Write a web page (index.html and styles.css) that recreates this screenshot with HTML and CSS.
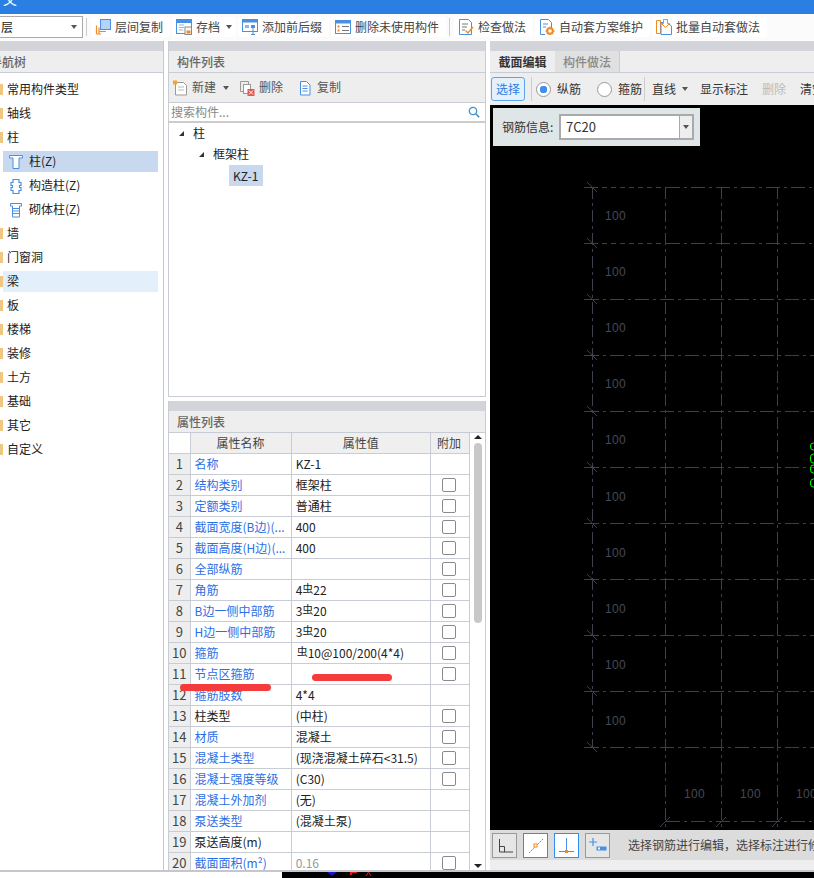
FILE: index.html
```
<!DOCTYPE html>
<html lang="zh-CN">
<head>
<meta charset="utf-8">
<title>截面编辑</title>
<link rel="stylesheet" href="styles.css">
</head>
<body>
<div class="app">
  <header class="titlebar"><span class="title-text">义</span></header>

  <div class="toolbar">
    <div class="combo"><span class="combo-text">层</span><i class="caret"></i></div>
    <span class="tb-sep"></span>
    <div class="tile">
      <svg class="ic" viewBox="0 0 16 16"><path d="M1.500 15V6.500M1.500 15H6M4 15V8.500" fill="none" stroke="#f08a24" stroke-width="1.200"/><rect x="5.500" y="0.500" width="10" height="10" fill="#b5d3f7" stroke="#4a90e2"/><path d="M4 12.500h7" fill="none" stroke="#f08a24"/></svg>
      <span>层间复制</span>
    </div>
    <div class="tile">
      <svg class="ic" viewBox="0 0 16 16"><rect x="0.500" y="0.500" width="15" height="14" fill="#fff" stroke="#4a90e2"/><path d="M1 1h14v3H1z" fill="#4a90e2"/><path d="M3 6h5M3 8.500h5M3 11h4" stroke="#8ab6ea"/><rect x="9" y="8" width="6.500" height="7.500" fill="#fff" stroke="#888"/><rect x="10.500" y="11.500" width="4" height="3" fill="#f08a24"/></svg>
      <span>存档</span><i class="caret caret-gap"></i>
    </div>
    <div class="tile">
      <svg class="ic" viewBox="0 0 16 16"><rect x="0.500" y="0.500" width="15" height="12" fill="#fff" stroke="#4a90e2"/><path d="M1 1h14v2.500H1z" fill="#4a90e2"/><path d="M3 6h4v3H3z" fill="#8ab6ea"/><path d="M9 6h4v3H9z" fill="#4a90e2"/><path d="M11 9v6.500M9 15.500h4" stroke="#4a90e2"/></svg>
      <span>添加前后缀</span>
    </div>
    <div class="tile">
      <svg class="ic" viewBox="0 0 16 16"><rect x="0.500" y="1.500" width="15" height="13" fill="#fff" stroke="#4a90e2"/><path d="M1 2h14v2.500H1z" fill="#4a90e2"/><path d="M2.500 6.500h2v2h-2zM2.500 10.500h2v2h-2z" fill="#f08a24"/><path d="M7 7.500h7M7 11.500h7" stroke="#777"/></svg>
      <span>删除未使用构件</span>
    </div>
    <span class="tb-sep"></span>
    <div class="tile">
      <svg class="ic" viewBox="0 0 16 16"><path d="M1.500 0.500h9l3 3v12h-12z" fill="#fff" stroke="#4a90e2"/><path d="M4 5h6M4 8h5M4 11h3" stroke="#777"/><path d="M7.500 11.500l2.500 2.500 5-6" fill="none" stroke="#f08a24" stroke-width="1.400"/></svg>
      <span>检查做法</span>
    </div>
    <div class="tile">
      <svg class="ic" viewBox="0 0 16 16"><path d="M1.500 0.500h8l3 3v6M6 15.500H1.500V.5" fill="#fff" stroke="#4a90e2"/><path d="M4 5h5M4 8h3" stroke="#4a90e2"/><circle cx="11" cy="12" r="2.800" fill="none" stroke="#f08a24" stroke-width="2"/><path d="M11 7.500v2M11 14.500v2M6.500 12h2M13.500 12h2M8 9l1.300 1.300M14 9l-1.300 1.300M8 15l1.300-1.300M14 15l-1.300-1.300" stroke="#f08a24" stroke-width="1.300"/></svg>
      <span>自动套方案维护</span>
    </div>
    <div class="tile">
      <svg class="ic" viewBox="0 0 16 16"><path d="M0.500 1.500h4v13h-4z" fill="#fff" stroke="#f08a24"/><path d="M5 3.500h6l4.500 3.500v8.500H5z" fill="#fff" stroke="#4a90e2"/><path d="M7.500 0.500h4v4h2l-4 4-4-4h2z" fill="#fff" stroke="#f08a24"/></svg>
      <span>批量自动套做法</span>
    </div>
  </div>

  <main class="main">
    <section class="panel nav">
      <div class="band"></div>
      <div class="phead nav-head">导航树</div>
      <div class="nav-tree">
        <div class="nrow"><i class="folder"></i>常用构件类型</div>
        <div class="nrow"><i class="folder"></i>轴线</div>
        <div class="nrow"><i class="folder"></i>柱</div>
        <div class="nrow sub selected">
          <svg class="ic sub-ic" viewBox="0 0 16 16"><path d="M1.500 1.500h13v2.500h-3.500v10.500h-6V4H1.500z" fill="#fff" stroke="#4a90e2"/></svg>柱(Z)
        </div>
        <div class="nrow sub">
          <svg class="ic sub-ic" viewBox="0 0 16 16"><path d="M5 1.500h6v3h2v3h-1.500v2H13v3h-2v3H5v-3H3v-3h1.500v-2H3v-3h2z" fill="#fff" stroke="#4a90e2" stroke-width="1.200"/></svg>构造柱(Z)
        </div>
        <div class="nrow sub">
          <svg class="ic sub-ic" viewBox="0 0 16 16"><path d="M2.500 1.500h11v2.500h-2v11h-7V4h-2z" fill="#fff" stroke="#4a90e2"/><path d="M5 6.500h6M5 9h6M5 11.500h6" stroke="#4a90e2"/></svg>砌体柱(Z)
        </div>
        <div class="nrow"><i class="folder"></i>墙</div>
        <div class="nrow"><i class="folder"></i>门窗洞</div>
        <div class="nrow hover"><i class="folder"></i>梁</div>
        <div class="nrow"><i class="folder"></i>板</div>
        <div class="nrow"><i class="folder"></i>楼梯</div>
        <div class="nrow"><i class="folder"></i>装修</div>
        <div class="nrow"><i class="folder"></i>土方</div>
        <div class="nrow"><i class="folder"></i>基础</div>
        <div class="nrow"><i class="folder"></i>其它</div>
        <div class="nrow"><i class="folder"></i>自定义</div>
      </div>
    </section>

    <div class="midcol">
      <section class="panel list">
        <div class="band"></div>
        <div class="phead">构件列表</div>
        <div class="list-tools">
          <span class="ltool">
            <svg class="ic" viewBox="0 0 16 16"><path d="M3.500 2.500h8l3 3v9.500h-11z" fill="#fff" stroke="#999"/><path d="M6 7h6M6 10h6" stroke="#bbb"/><path d="M1 0.500h4v4H1z" fill="#f5a623"/></svg>新建<i class="caret caret-new"></i>
          </span>
          <span class="ltool">
            <svg class="ic" viewBox="0 0 16 16"><path d="M1.500 1.500h8v3M1.500 1.500v10h3" fill="none" stroke="#999"/><rect x="4.500" y="4.500" width="7" height="9" fill="#fff" stroke="#999"/><rect x="8.500" y="9" width="7" height="7" fill="#e2574c"/><path d="M10 10.500l4 4M14 10.500l-4 4" stroke="#fff"/></svg>删除
          </span>
          <span class="ltool">
            <svg class="ic" viewBox="0 0 16 16"><path d="M3.500 1.500h6l3.500 3.500v10h-9.500z" fill="#fff" stroke="#4a90e2"/><path d="M5.500 6h5M5.500 8.500h5M5.500 11h5" stroke="#4a90e2"/></svg>复制
          </span>
        </div>
        <div class="search">
          <span class="search-text">搜索构件...</span>
          <svg class="search-ic" viewBox="0 0 12 12"><circle cx="5" cy="5" r="3.700" fill="none" stroke="#3c8fc9" stroke-width="1.300"/><path d="M7.800 7.800l3.400 3.400" stroke="#3c8fc9" stroke-width="1.600"/></svg>
        </div>
        <div class="comp-tree">
          <div class="crow c1"><i class="tri"></i>柱</div>
          <div class="crow c2"><i class="tri"></i>框架柱</div>
          <div class="crow c3"><span class="csel">KZ-1</span></div>
        </div>
      </section>

      <section class="panel props">
        <div class="band"></div>
        <div class="phead">属性列表</div>
        <div class="props-body">
          <table class="ptable">
            <thead>
              <tr><th class="cn corner"></th><th class="cname">属性名称</th><th class="cval">属性值</th><th class="cadd">附加</th></tr>
            </thead>
            <tbody>
              <tr><td class="cn">1</td><td class="link">名称</td><td>KZ-1</td><td></td></tr>
              <tr><td class="cn">2</td><td class="link">结构类别</td><td>框架柱</td><td class="cadd"><i class="chk"></i></td></tr>
              <tr><td class="cn">3</td><td class="link">定额类别</td><td>普通柱</td><td class="cadd"><i class="chk"></i></td></tr>
              <tr><td class="cn">4</td><td class="link">截面宽度(B边)(...</td><td>400</td><td class="cadd"><i class="chk"></i></td></tr>
              <tr><td class="cn">5</td><td class="link">截面高度(H边)(...</td><td>400</td><td class="cadd"><i class="chk"></i></td></tr>
              <tr><td class="cn">6</td><td class="link">全部纵筋</td><td></td><td class="cadd"><i class="chk"></i></td></tr>
              <tr><td class="cn">7</td><td class="link">角筋</td><td>4<span class="rebar">虫</span>22</td><td class="cadd"><i class="chk"></i></td></tr>
              <tr><td class="cn">8</td><td class="link">B边一侧中部筋</td><td>3<span class="rebar">虫</span>20</td><td class="cadd"><i class="chk"></i></td></tr>
              <tr><td class="cn">9</td><td class="link">H边一侧中部筋</td><td>3<span class="rebar">虫</span>20</td><td class="cadd"><i class="chk"></i></td></tr>
              <tr><td class="cn">10</td><td class="link">箍筋</td><td><span class="rebar rebar-first">虫</span>10@100/200(4*4)</td><td class="cadd"><i class="chk"></i></td></tr>
              <tr><td class="cn">11</td><td class="link">节点区箍筋</td><td></td><td class="cadd"><i class="chk"></i></td></tr>
              <tr><td class="cn">12</td><td class="link">箍筋肢数</td><td>4*4</td><td></td></tr>
              <tr><td class="cn">13</td><td>柱类型</td><td>(中柱)</td><td class="cadd"><i class="chk"></i></td></tr>
              <tr><td class="cn">14</td><td class="link">材质</td><td>混凝土</td><td class="cadd"><i class="chk"></i></td></tr>
              <tr><td class="cn">15</td><td class="link">混凝土类型</td><td>(现浇混凝土碎石&lt;31.5)</td><td class="cadd"><i class="chk"></i></td></tr>
              <tr><td class="cn">16</td><td class="link">混凝土强度等级</td><td>(C30)</td><td class="cadd"><i class="chk"></i></td></tr>
              <tr><td class="cn">17</td><td class="link">混凝土外加剂</td><td>(无)</td><td></td></tr>
              <tr><td class="cn">18</td><td class="link">泵送类型</td><td>(混凝土泵)</td><td></td></tr>
              <tr><td class="cn">19</td><td>泵送高度(m)</td><td></td><td></td></tr>
              <tr><td class="cn">20</td><td class="link">截面面积(m²)</td><td class="muted">0.16</td><td class="cadd"><i class="chk"></i></td></tr>
            </tbody>
          </table>
          <div class="scroll">
            <i class="sc-up"></i>
            <div class="sc-thumb"></div>
            <i class="sc-down"></i>
          </div>
          <i class="mark mark-a"></i>
          <i class="mark mark-b"></i>
        </div>
      </section>
    </div>

    <section class="panel editor">
      <div class="band"></div>
      <div class="tabs">
        <span class="tab active">截面编辑</span>
        <span class="tab">构件做法</span>
      </div>
      <div class="ed-tools">
        <span class="sel-btn">选择</span>
        <span class="vsep"></span>
        <i class="radio on"></i><span class="rlabel">纵筋</span>
        <i class="radio r2"></i><span class="rlabel">箍筋</span>
        <span class="vsep vsep2"></span>
        <span class="etext">直线</span><i class="caret caret-line"></i>
        <span class="etext e-show">显示标注</span>
        <span class="etext e-del">删除</span>
        <span class="etext e-clear">清空钢筋</span>
      </div>
      <div class="canvas">
        <svg class="draw" width="324" height="725" viewBox="490 105 324 725">
          <g class="g-solid">
            <path class="d-short" d="M593 187.500H666"/>
            <path class="d-mix" d="M666 187.500H814"/>
            <path class="d-short" d="M593 243.500H666"/>
            <path class="d-mix" d="M666 243.500H814"/>
            <path class="d-mix" d="M585 299.500H814M585 355.500H814M585 411.500H814M585 467.500H814M585 523.500H814M585 579.500H814M585 635.500H814M585 691.500H814M585 747.500H814M666 821.500H814"/>
            <path class="d-v" d="M592.500 187V748M665.500 187V830M721.500 187V830M777.500 187V830"/>
            <path d="M584 187.500H593M584 243.500H593M584 299.500H593M584 355.500H593M584 411.500H593M584 467.500H593M584 523.500H593M584 579.500H593M584 635.500H593M584 691.500H593M584 747.500H593"/>
            <path d="M587 182l10 10M587 238l10 10M587 294l10 10M587 350l10 10M587 406l10 10M587 462l10 10M587 518l10 10M587 574l10 10M587 630l10 10M587 686l10 10M587 742l10 10M660 827l10-10M716 827l10-10M772 827l10-10"/>
          </g>
          <g class="g-text">
            <text x="605" y="220">100</text><text x="605" y="276">100</text><text x="605" y="332">100</text><text x="605" y="388">100</text><text x="605" y="444">100</text><text x="605" y="501">100</text><text x="605" y="557">100</text><text x="605" y="613">100</text><text x="605" y="669">100</text><text x="605" y="725">100</text>
            <text x="684" y="798">100</text><text x="740" y="798">100</text><text x="796" y="798">100</text>
          </g>
          <g class="g-rebar">
            <rect x="810.500" y="443" width="10" height="7" rx="3"/><rect x="810.500" y="454" width="10" height="9" rx="3"/><rect x="810.500" y="465" width="10" height="8" rx="3"/><rect x="810.500" y="479" width="10" height="8" rx="3"/>
          </g>
        </svg>
        <div class="rebar-info">
          <span class="ri-label">钢筋信息:</span>
          <div class="ri-select"><span class="ri-value">7C20</span><span class="ri-drop"><i class="caret"></i></span></div>
        </div>
      </div>
      <div class="statusbar">
        <span class="sb-btn">
          <svg viewBox="0 0 19 19" class="sb-ic"><path d="M4.500 3v13H18M4.500 10.500h5v5.500" fill="none" stroke="#444"/></svg>
        </span>
        <span class="sb-btn on">
          <svg viewBox="0 0 19 19" class="sb-ic"><path d="M3 17L17 3" fill="none" stroke="#4a90e2" stroke-dasharray="2 1"/><rect x="8" y="8" width="3" height="3" fill="#fff" stroke="#f08a24" stroke-width="1"/></svg>
        </span>
        <span class="sb-btn on">
          <svg viewBox="0 0 19 19" class="sb-ic"><path d="M9.500 2v14M2 15.500h15" fill="none" stroke="#4a90e2"/><rect x="8" y="14" width="3" height="3" fill="#f08a24"/></svg>
        </span>
        <span class="sb-btn">
          <svg viewBox="0 0 19 19" class="sb-ic"><path d="M5 2v8M1 6h8" fill="none" stroke="#4a90e2" stroke-width="1.200"/><rect x="8.500" y="10.500" width="10" height="4" fill="#4a90e2"/><rect x="10" y="11.500" width="2" height="2" fill="#fff"/></svg>
        </span>
        <span class="hint">选择钢筋进行编辑，选择标注进行修改</span>
      </div>
      <div class="ed-foot"></div>
    </section>
  </main>

  <footer class="foot">
    <div class="foot-white"></div>
    <svg class="foot-black" width="532" height="6" viewBox="282 872 532 6">
      <path d="M327 872h10l-5 4z" fill="#1515c8"/>
      <path d="M350 872h7v1h-5v2h-2z" fill="#e01818"/>
      <path d="M366 876l2.500-4 2.500 4" fill="none" stroke="#e01818"/>
    </svg>
  </footer>
</div>
</body>
</html>
```
FILE: styles.css
```
* { box-sizing: border-box; }
html, body { margin: 0; padding: 0; background: #fff; }
body {
  width: 814px;
  height: 878px;
  overflow: hidden;
  font: 12px/1.2 "Noto Sans CJK SC", "Liberation Sans", sans-serif;
  color: #333;
}
i { display: block; font-style: normal; }
.app { display: flex; flex-direction: column; height: 878px; overflow: hidden; }

.titlebar { height: 14px; background: #2c7fe2; overflow: hidden; flex: none; }
.title-text { display: block; margin: -9px 0 0 3px; color: #fff; font-size: 14px; line-height: 16px; }

.toolbar {
  height: 26px; flex: none; display: flex; align-items: center; gap: 2px;
  background: #fbfbfb; white-space: nowrap;
}
.combo {
  width: 84px; height: 22px; margin-left: -1px; border: 1px solid #aaa; background: #fff;
  display: flex; align-items: center; justify-content: space-between; padding: 0 5px 0 1px;
}
.combo-text { color: #222; }
.caret { width: 0; height: 0; flex: none; border-left: 3.500px solid transparent; border-right: 3.500px solid transparent; border-top: 4px solid #555; }
.tb-sep { width: 1px; height: 18px; background: #ccc; margin: 0 2px 0 1px; }
.tile { display: flex; align-items: center; height: 20px; padding: 0 7px 0 4px; background: #fff; border-radius: 3px; color: #444; }
.tile .ic { margin-right: 4px; }
.ic { width: 16px; height: 16px; flex: none; display: block; }
.caret-gap { margin: 0 -3px 0 6px; }

.main { flex: none; height: 830px; padding-top: 1px; display: flex; background: #fff; }
.panel { display: flex; flex-direction: column; background: #fff; }
.band { height: 10px; background: #d2d4d9; flex: none; }
.phead {
  height: 22px; flex: none; line-height: 22px; padding-left: 8px;
  background: #eee; border-bottom: 1px solid #c8ccd4; color: #666; font-weight: 500;
}

.nav { width: 164px; margin-right: 4px; border-right: 1px solid #c4c7cd; flex: none; }
.nav-head { padding-left: 0; margin-left: -10px; }
.nav-tree { padding-top: 3px; }
.nrow { display: flex; align-items: center; height: 21px; margin: 3px 5px 0 3px; color: #222; }
.folder { width: 3px; height: 11px; margin: 0 4px 0 -3px; background: #efc682; flex: none; }
.sub { padding-left: 5px; }
.sub-ic { margin-right: 5px; }
.selected { background: #c7d8ef; }
.hover { background: #e3f0fc; }

.midcol { width: 318px; flex: none; display: flex; flex-direction: column; margin-right: 4px; }
.list { height: 356px; flex: none; border: 1px solid #c8ccd4; border-top: 0; margin-bottom: 4px; }
.list-tools { height: 30px; flex: none; background: #eee; border-bottom: 1px solid #c8ccd4; display: flex; align-items: center; padding-left: 3px; color: #555; }
.ltool { display: flex; align-items: center; margin-right: 14px; }
.ltool .ic { margin-right: 4px; }
.caret-new { margin: 0 -4px 0 7px; }
.search { height: 20px; flex: none; display: flex; align-items: center; justify-content: space-between; padding: 0 5px 0 2px; border-bottom: 2px solid #ccc; }
.search-text { color: #888; }
.search-ic { width: 12px; height: 12px; display: block; }
.comp-tree { flex: 1; color: #222; }
.crow { height: 21px; display: flex; align-items: center; }
.c1 { padding-left: 10px; }
.c2 { padding-left: 30px; }
.c3 { padding-left: 60px; }
.tri { width: 0; height: 0; margin-right: 9px; border-left: 5px solid transparent; border-bottom: 5px solid #333; }
.csel { background: #c7d8ef; height: 21px; line-height: 21px; padding: 0 4px; width: 34px; }

.props { flex: 1; min-height: 0; border-left: 1px solid #c8ccd4; border-right: 1px solid #c8ccd4; }
.props-body { position: relative; flex: 1; min-height: 0; overflow: hidden; display: flex; }
.ptable { width: 301px; table-layout: fixed; border-collapse: collapse; flex: none; align-self: flex-start; }
.ptable th, .ptable td {
  height: 21px; padding: 1px 0 0 4px; border: 1px solid #c8ccd4; text-align: left;
  font-weight: 400; white-space: nowrap; overflow: hidden; color: #222;
}
.ptable thead th { height: 20px; background: #efefef; text-align: center; padding: 1px 0 0; border-top: 0; color: #444; }
.ptable th:first-child, .ptable td:first-child { border-left: 0; }
.ptable .corner { background: #fff; border-top: 0; }
.ptable .cn { width: 21px; background: #eee; text-align: center; padding: 1px 0 0; font-size: 13px; color: #444; }
.ptable .corner.cn { background: #fff; border-left: 0; }
.cname { width: 101px; }
.cval { width: 139px; }
.ptable .cadd { width: 39px; padding: 0 2px 0 0; text-align: center; }
.ptable thead .cadd { padding: 1px 2px 0 0; }
.ptable .link { color: #2b6fe6; }
.ptable .muted { color: #999; }
.rebar { font-size: 11px; position: relative; top: -2px; }
.rebar-first { margin-left: 1px; }
.chk { width: 14px; height: 14px; margin: 0 auto; border: 1px solid #8a8a8a; border-radius: 2px; background: #fff; }
.scroll { width: 16px; flex: none; position: relative; display: flex; flex-direction: column; align-items: center; background: #fff; }
.sc-up { margin-top: 2px; width: 0; height: 0; border-left: 4px solid transparent; border-right: 4px solid transparent; border-bottom: 4px solid #222; }
.sc-thumb { margin-top: 4px; width: 8px; height: 180px; border-radius: 4px; background: #c8c8c8; }
.sc-down { margin-top: 241px; width: 0; height: 0; border-left: 4px solid transparent; border-right: 4px solid transparent; border-top: 4px solid #222; }
.mark { position: absolute; height: 7px; border-radius: 4px; background: #f53b3b; }
.mark-a { left: 11px; top: 251px; width: 91px; }
.mark-b { left: 143px; top: 241px; width: 80px; }

.editor { flex: 1; min-width: 0; overflow: hidden; }
.tabs { height: 22px; flex: none; display: flex; background: #eee; border-bottom: 1px solid #c8ccd4; }
.tab { width: 65px; text-align: center; line-height: 21px; color: #888; font-weight: 500; background: #e0e0e0; border-right: 1px solid #c8ccd4; }
.tab.active { background: #eee; color: #333; font-weight: 700; border-right: 0; }
.ed-tools { height: 32px; flex: none; background: #eee; display: flex; align-items: center; padding-left: 1px; white-space: nowrap; color: #333; overflow: hidden; }
.ed-tools > * { flex: none; }
.sel-btn { width: 34px; height: 24px; line-height: 22px; text-align: center; border: 1px solid #5aa6ee; border-radius: 3px; background: #e4f1fd; color: #2b7de1; }
.vsep { width: 1px; height: 24px; background: #ccc; margin: 0 4px 0 6px; }
.vsep2 { margin: 0 7px 0 2px; }
.radio { width: 15px; height: 15px; border-radius: 50%; border: 1px solid #999; background: #fff; position: relative; }
.radio.on { background: radial-gradient(circle, #3f8ff0 0 3.500px, #fff 4px); }
.r2 { margin-left: 16px; }
.rlabel { margin-left: 6px; }
.caret-line { margin: 0 12px 0 6px; }
.e-show { margin-right: 14px; }
.e-del { color: #bbb; margin-right: 14px; }

.canvas { position: relative; height: 725px; flex: none; background: #000; overflow: hidden; }
.draw { display: block; }
.g-solid path { fill: none; stroke: #3c414c; stroke-width: 1; }
.g-solid .d-short { stroke-dasharray: 5 4; }
.g-solid .d-mix { stroke-dasharray: 14 4 3 4; }
.g-solid .d-v { stroke-dasharray: 12 4 3 4; }
.g-text text { font: 12px "Liberation Sans", sans-serif; fill: #444a56; letter-spacing: .3px; }
.g-rebar rect { fill: none; stroke: #0f0; stroke-width: 1; }
.rebar-info {
  position: absolute; left: 3px; top: 3px; width: 207px; height: 38px;
  display: flex; align-items: center; padding-left: 9px; background: #dfe6e8; color: #333;
}
.ri-label { width: 57px; flex: none; }
.ri-select { width: 135px; height: 26px; display: flex; border: 2px solid #aaa; background: #fff; }
.ri-value { flex: 1; line-height: 21px; padding-left: 5px; color: #333; font-size: 13px; }
.ri-drop { width: 13px; border-left: 1px solid #aaa; background: #eee; display: flex; align-items: center; justify-content: center; }
.statusbar { height: 30px; flex: none; background: #dcdcdc; display: flex; align-items: center; padding-left: 2px; gap: 6px; white-space: nowrap; }
.sb-btn { width: 25px; height: 25px; border: 1px solid #999; background: #e6e6e6; display: flex; align-items: center; justify-content: center; flex: none; }
.sb-btn.on { border-color: #2e90ee; background: #fff; }
.sb-ic { width: 19px; height: 19px; display: block; }
.hint { margin-left: 12px; color: #444; }
.ed-foot { flex: 1; background: #eee; }

.foot { flex: 1; min-height: 0; display: flex; border-top: 2px solid #c4c7cd; overflow: hidden; }
.foot-white { width: 282px; background: #fff; flex: none; }
.foot-black { background: #000; display: block; flex: none; }
```
